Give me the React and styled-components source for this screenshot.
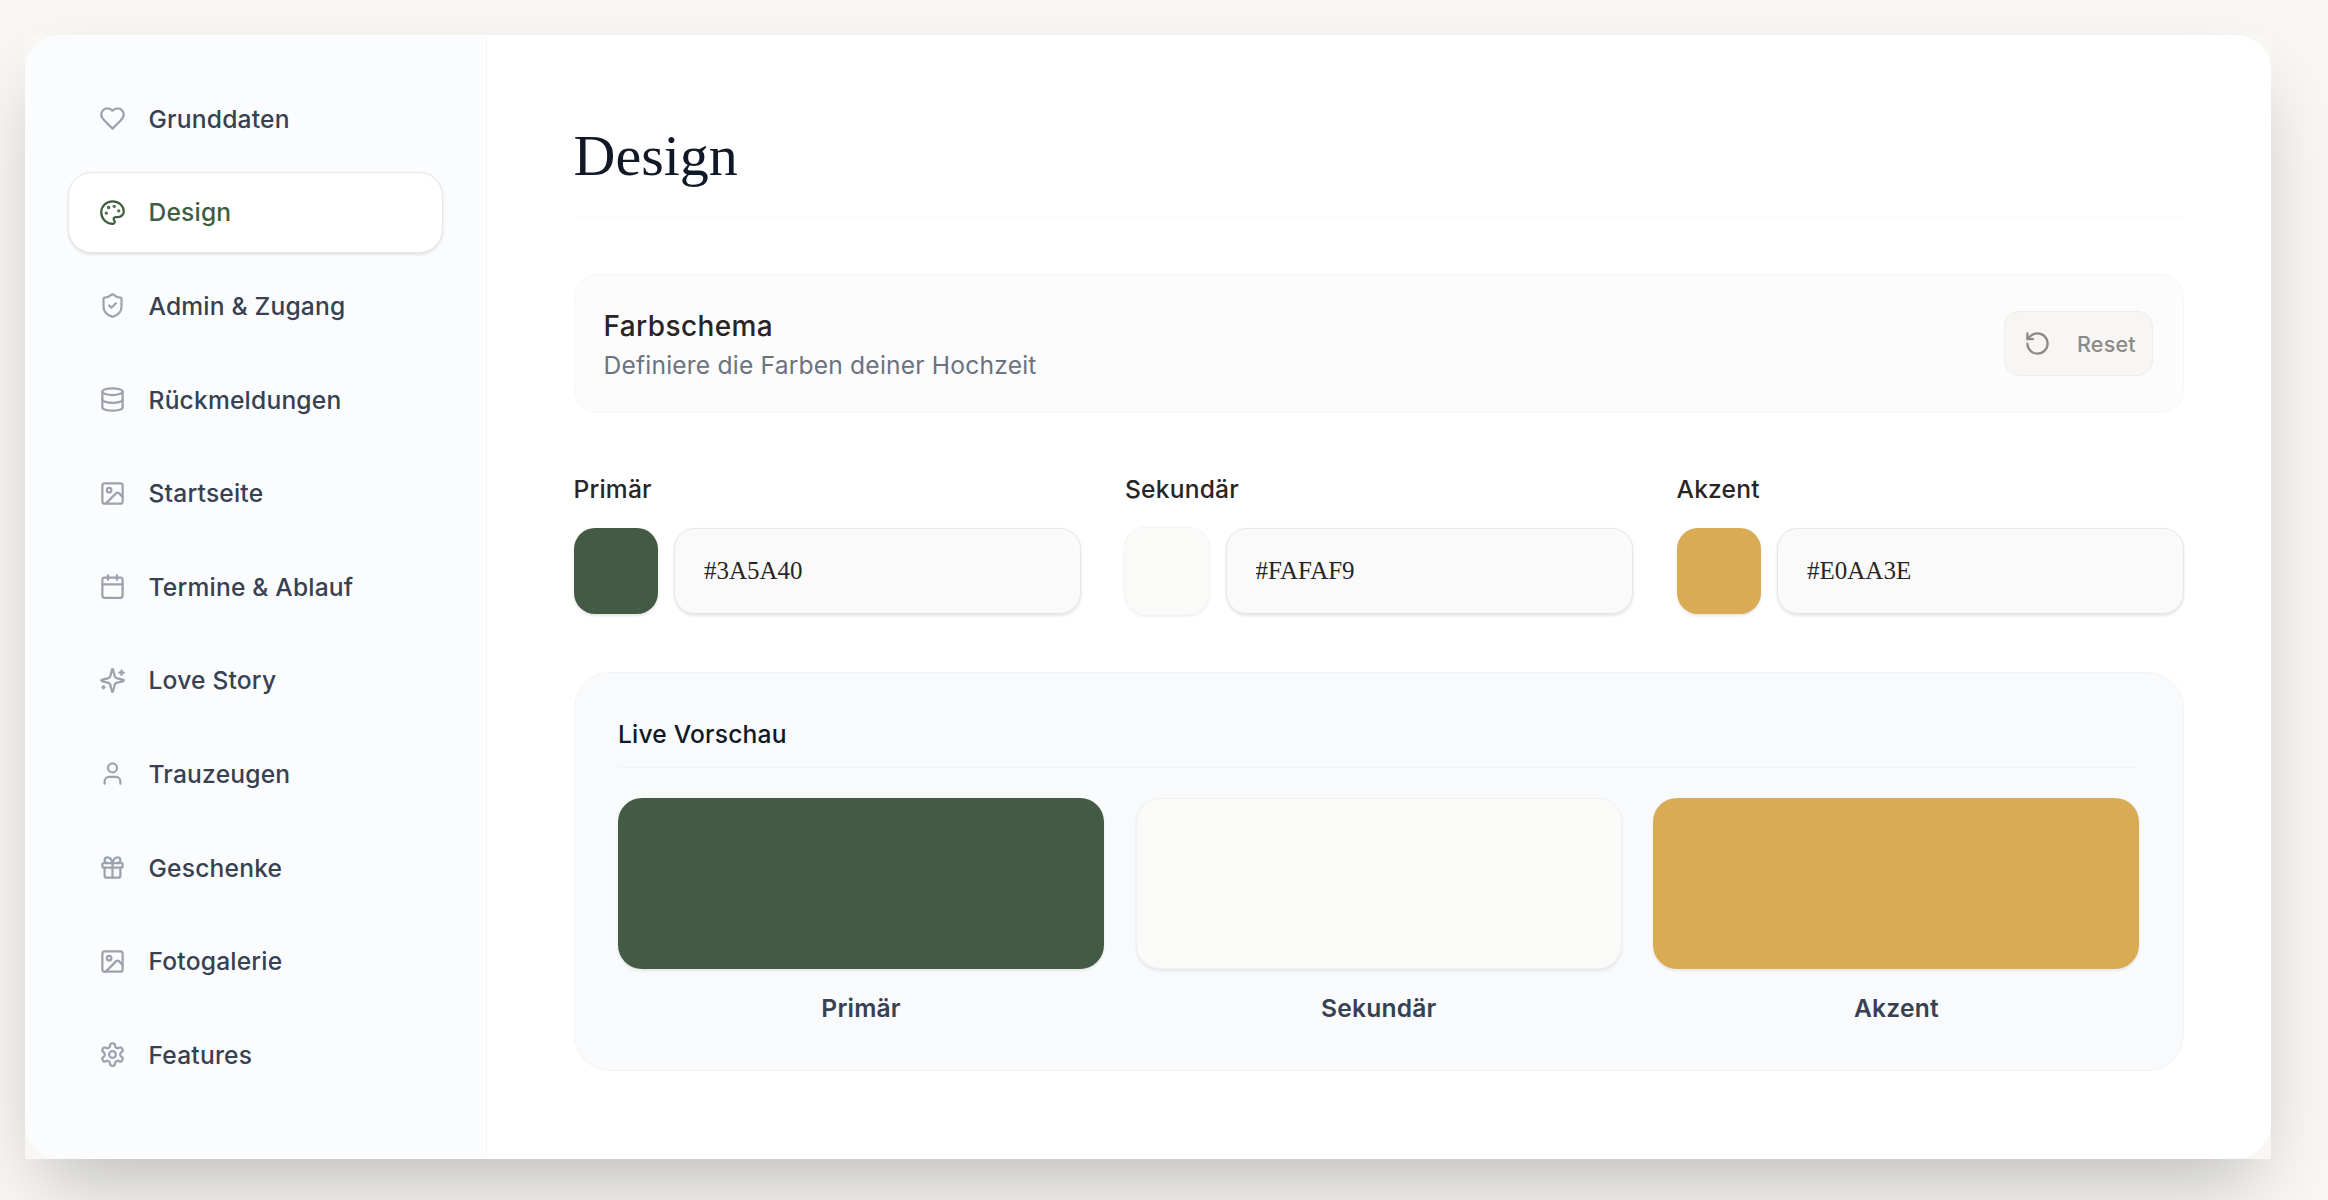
import React from 'react';
import styled, { createGlobalStyle } from 'styled-components';
import {
  Calendar,
  Database,
  Gift,
  Image,
  Palette,
  RotateCcw,
  ShieldCheck,
  User,
} from 'lucide-react';

const GlobalStyle = createGlobalStyle`
  html, body {
    margin: 0;
    padding: 0;
    background: #f8f7f3;
  }
  * {
    box-sizing: border-box;
  }
`;

const Page = styled.div`
  width: 2328px;
  height: 1200px;
  padding: 35px 57px 0 25px;
  overflow: hidden;
  font-family: Inter, "Liberation Sans", sans-serif;
  letter-spacing: 0.012em;
`;

// shadow sits on a square shell, the rounded card lies inside it
const Shell = styled.div`
  width: 2246px;
  box-shadow: 0 37px 75px -18px rgba(0, 0, 0, 0.25);
`;

const Card = styled.div`
  display: flex;
  background: #fff;
  border-radius: 36px;
  overflow: hidden;
`;

const Sidebar = styled.nav`
  display: flex;
  flex-direction: column;
  gap: 12px;
  flex: 0 0 461.5px;
  padding: 43px 43px 0;
  background: #fbfcfe;
  border-right: 1px solid #f3f4f6;
`;

const NavItem = styled.a`
  display: flex;
  align-items: center;
  gap: 22.5px;
  height: 81.6px;
  padding: 0 30px;
  border: 1px solid ${(p) => (p.$active ? '#e5e7eb' : 'transparent')};
  border-radius: 24px;
  background: ${(p) => (p.$active ? '#fff' : 'transparent')};
  box-shadow: ${(p) => (p.$active ? '0 1.5px 3px rgba(0, 0, 0, 0.1)' : 'none')};
  color: ${(p) => (p.$active ? '#3f5e3f' : '#374151')};
  font-size: 24.6px;
  font-weight: 500;
  line-height: 36px;

  svg {
    flex: none;
    color: ${(p) => (p.$active ? '#3f5e3f' : '#9ca3af')};
  }
`;

const Main = styled.main`
  flex: 1;
  min-width: 0;
  padding: 91px 87px 88px;
`;

const Header = styled.header`
  margin-bottom: 57px;
  padding-bottom: 30px;
  border-bottom: 1px solid #fbfbfb;
`;

const Heading = styled.h1`
  margin: 0;
  color: #111827;
  font-family: "Liberation Serif", serif;
  font-size: 58px;
  font-weight: 400;
  letter-spacing: normal;
  line-height: 60px;
`;

const SchemeBox = styled.section`
  display: flex;
  align-items: center;
  justify-content: space-between;
  height: 139px;
  margin-bottom: 58px;
  padding: 0 30px 0 29px;
  background: #fcfcfc;
  border: 1px solid #f6f6f5;
  border-radius: 24px;
`;

const SchemeCopy = styled.div`
  padding-top: 2px;
`;

const SchemeTitle = styled.h2`
  margin: 0;
  color: #292524;
  font-size: 28px;
  font-weight: 500;
  letter-spacing: 0.014em;
  line-height: 41px;
`;

const SchemeText = styled.p`
  margin: 0;
  color: #6b7280;
  font-size: 24.6px;
  font-weight: 400;
  line-height: 37px;
`;

const ResetButton = styled.button`
  display: flex;
  align-items: center;
  gap: 26px;
  width: 149px;
  height: 65px;
  padding: 0 0 0 19px;
  background: #f7f6f4;
  border: 1px solid #eeedea;
  border-radius: 15px;
  color: #8c8a87;
  font-family: inherit;
  font-size: 21.5px;
  font-weight: 500;
  letter-spacing: inherit;
  line-height: 30px;
`;

const ColorGrid = styled.div`
  display: grid;
  grid-template-columns: repeat(3, 1fr);
  gap: 44px;
  margin-bottom: 58px;
`;

const FieldLabel = styled.label`
  display: block;
  margin-bottom: 21px;
  color: #292524;
  font-size: 24.6px;
  font-weight: 500;
  line-height: 36px;
`;

const FieldRow = styled.div`
  display: flex;
  gap: 16.5px;
`;

const Swatch = styled.div`
  flex: 0 0 84px;
  height: 86px;
  background: ${(p) => p.$color};
  border-radius: 21px;
  box-shadow: ${(p) => (p.$outlined ? '0 0 0 1.5px #f6f6f8,' : '')} 0 1.5px 3px rgba(0, 0, 0, 0.1);
`;

const HexInput = styled.input`
  flex: 1;
  min-width: 0;
  height: 86px;
  padding: 0 29px;
  background: #fafafa;
  border: 1px solid #e5e7eb;
  border-radius: 21px;
  box-shadow: 0 1.5px 3px rgba(0, 0, 0, 0.1);
  color: #292524;
  font-family: "Liberation Serif", serif;
  font-size: 25px;
  outline: none;
`;

const PreviewPanel = styled.section`
  padding: 43px 43.5px 44px;
  background: #f9fafb;
  border: 1px solid #f3f4f6;
  border-radius: 36px;
`;

const PreviewTitle = styled.h3`
  margin: 0 0 30px;
  padding-bottom: 15px;
  border-bottom: 1px solid #f3f4f6;
  color: #111827;
  font-size: 24.6px;
  font-weight: 500;
  line-height: 36px;
`;

const PreviewGrid = styled.div`
  display: grid;
  grid-template-columns: repeat(3, 1fr);
  gap: 31.5px;
`;

const PreviewBlock = styled.div`
  height: 171px;
  margin-bottom: 21px;
  background: ${(p) => p.$color};
  border-radius: 24px;
  border: ${(p) => (p.$outlined ? '1px solid #f0f1f3' : 'none')};
  box-shadow: 0 1.5px 3px rgba(0, 0, 0, 0.08);
`;

const PreviewLabel = styled.div`
  color: #374151;
  font-size: 24.6px;
  font-weight: 600;
  line-height: 36px;
  text-align: center;
`;

// these three follow the older lucide outlines, closer to the picture
const LineIcon = ({ size, children }) => (
  <svg
    width={size}
    height={size}
    viewBox="0 0 24 24"
    fill="none"
    stroke="currentColor"
    strokeWidth="2"
    strokeLinecap="round"
    strokeLinejoin="round"
  >
    {children}
  </svg>
);

const HeartIcon = ({ size }) => (
  <LineIcon size={size}>
    <path d="M19 14c1.49-1.46 3-3.21 3-5.5A5.5 5.5 0 0 0 16.5 3c-1.76 0-3 .5-4.5 2-1.5-1.5-2.74-2-4.5-2A5.5 5.5 0 0 0 2 8.5c0 2.3 1.5 4.05 3 5.5l7 7Z" />
  </LineIcon>
);

const SparkleIcon = ({ size }) => (
  <LineIcon size={size}>
    <path d="M9.937 15.5A2 2 0 0 0 8.5 14.063l-6.135-1.582a.5.5 0 0 1 0-.962L8.5 9.936A2 2 0 0 0 9.937 8.5l1.582-6.135a.5.5 0 0 1 .963 0L14.063 8.5A2 2 0 0 0 15.5 9.937l6.135 1.581a.5.5 0 0 1 0 .964L15.5 14.063a2 2 0 0 0-1.437 1.437l-1.582 6.135a.5.5 0 0 1-.963 0z" />
    <path d="M20 3v4" />
    <path d="M22 5h-4" />
    <path d="M4 17v2" />
    <path d="M5 18H3" />
  </LineIcon>
);

const GearIcon = ({ size }) => (
  <LineIcon size={size}>
    <path d="M12.22 2h-.44a2 2 0 0 0-2 2v.18a2 2 0 0 1-1 1.73l-.43.25a2 2 0 0 1-2 0l-.15-.08a2 2 0 0 0-2.73.73l-.22.38a2 2 0 0 0 .73 2.73l.15.1a2 2 0 0 1 1 1.72v.51a2 2 0 0 1-1 1.74l-.15.09a2 2 0 0 0-.73 2.73l.22.38a2 2 0 0 0 2.73.73l.15-.08a2 2 0 0 1 2 0l.43.25a2 2 0 0 1 1 1.73V20a2 2 0 0 0 2 2h.44a2 2 0 0 0 2-2v-.18a2 2 0 0 1 1-1.73l.43-.25a2 2 0 0 1 2 0l.15.08a2 2 0 0 0 2.73-.73l.22-.39a2 2 0 0 0-.73-2.73l-.15-.08a2 2 0 0 1-1-1.74v-.5a2 2 0 0 1 1-1.74l.15-.09a2 2 0 0 0 .73-2.73l-.22-.38a2 2 0 0 0-2.73-.73l-.15.08a2 2 0 0 1-2 0l-.43-.25a2 2 0 0 1-1-1.73V4a2 2 0 0 0-2-2z" />
    <circle cx="12" cy="12" r="3" />
  </LineIcon>
);

const navItems = [
  { label: 'Grunddaten', icon: HeartIcon },
  { label: 'Design', icon: Palette, active: true },
  { label: 'Admin & Zugang', icon: ShieldCheck },
  { label: 'Rückmeldungen', icon: Database },
  { label: 'Startseite', icon: Image },
  { label: 'Termine & Ablauf', icon: Calendar },
  { label: 'Love Story', icon: SparkleIcon },
  { label: 'Trauzeugen', icon: User },
  { label: 'Geschenke', icon: Gift },
  { label: 'Fotogalerie', icon: Image },
  { label: 'Features', icon: GearIcon },
];

const colors = [
  { label: 'Primär', hex: '#3A5A40', color: '#435a44' },
  { label: 'Sekundär', hex: '#FAFAF9', color: '#fafaf8', outlined: true },
  { label: 'Akzent', hex: '#E0AA3E', color: '#d8ab54' },
];

const App = () => (
  <Page>
    <GlobalStyle />
    <Shell>
      <Card>
        <Sidebar>
          {navItems.map(({ label, icon: Icon, active }) => (
            <NavItem key={label} $active={active}>
              <Icon size={27} />
              {label}
            </NavItem>
          ))}
        </Sidebar>
        <Main>
          <Header>
            <Heading>Design</Heading>
          </Header>
          <SchemeBox>
            <SchemeCopy>
              <SchemeTitle>Farbschema</SchemeTitle>
              <SchemeText>Definiere die Farben deiner Hochzeit</SchemeText>
            </SchemeCopy>
            <ResetButton>
              <RotateCcw size={27} />
              Reset
            </ResetButton>
          </SchemeBox>
          <ColorGrid>
            {colors.map((c) => (
              <div key={c.label}>
                <FieldLabel>{c.label}</FieldLabel>
                <FieldRow>
                  <Swatch $color={c.color} $outlined={c.outlined} />
                  <HexInput defaultValue={c.hex} />
                </FieldRow>
              </div>
            ))}
          </ColorGrid>
          <PreviewPanel>
            <PreviewTitle>Live Vorschau</PreviewTitle>
            <PreviewGrid>
              {colors.map((c) => (
                <div key={c.label}>
                  <PreviewBlock $color={c.color} $outlined={c.outlined} />
                  <PreviewLabel>{c.label}</PreviewLabel>
                </div>
              ))}
            </PreviewGrid>
          </PreviewPanel>
        </Main>
      </Card>
    </Shell>
  </Page>
);

export default App;
